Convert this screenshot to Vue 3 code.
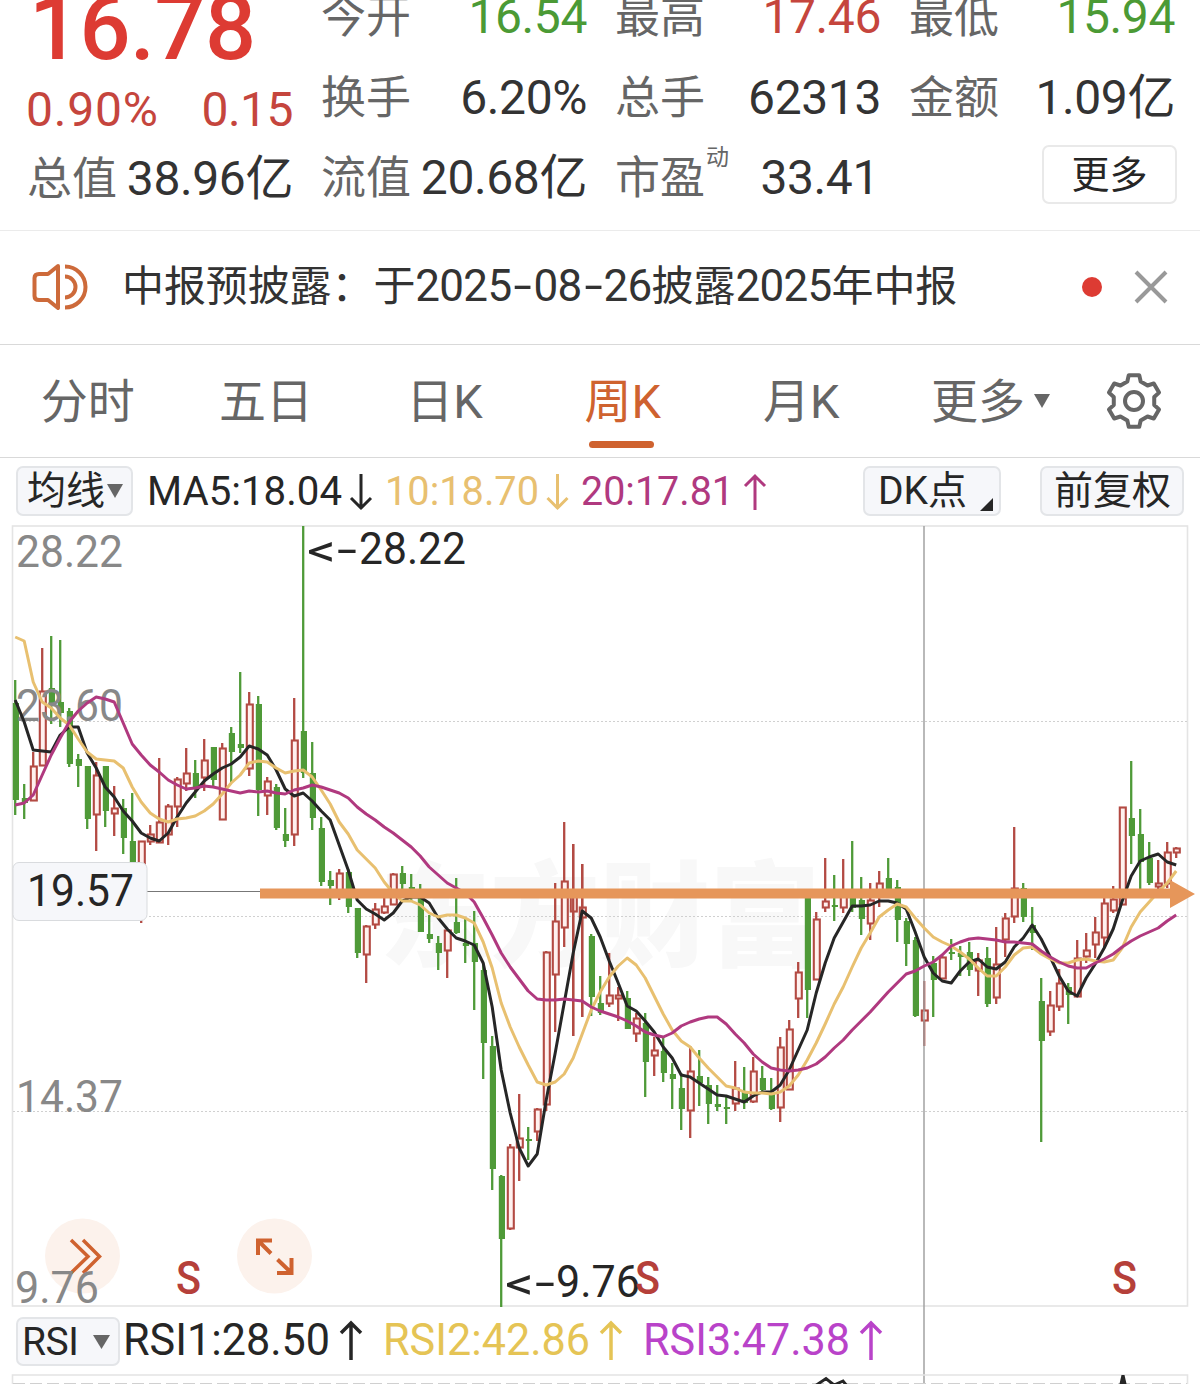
<script setup>
const quoteColumns = [
  [
    { label: '今开', value: '16.54', tone: 'green' },
    { label: '换手', value: '6.20%' },
    { label: '流值', value: '20.68亿' },
  ],
  [
    { label: '最高', value: '17.46', tone: 'red' },
    { label: '总手', value: '62313' },
    { label: '市盈', sup: '动', value: '33.41' },
  ],
  [
    { label: '最低', value: '15.94', tone: 'green' },
    { label: '金额', value: '1.09亿' },
  ],
]

const tabs = ['分时', '五日', '日K', '周K', '月K']
const activeTab = '周K'

const maLegend = [
  { text: 'MA5:18.04', x: 147, w: 195, color: '#262626', arrow: 361, up: false },
  { text: '10:18.70', x: 385, w: 154, color: '#e8c070', arrow: 557.5, up: false },
  { text: '20:17.81', x: 581, w: 153, color: '#b0397f', arrow: 755, up: true },
]
const rsiLegend = [
  { text: 'RSI1:28.50', x: 122, w: 207, color: '#262626', arrow: 350, up: true },
  { text: 'RSI2:42.86', x: 382, w: 207, color: '#e5c455', arrow: 610, up: true },
  { text: 'RSI3:47.38', x: 642, w: 207, color: '#b943c9', arrow: 870, up: true },
]

// direction, high, body top, body bottom, low; one entry per week
const raw = `G680,703,800,815 G784,798,803,819 R752,766,800,800 R648,691,765,765 G636,688,705,724 G640,702,713,727
G708,711,764,767 G754,759,766,787 G766,766,819,829 R762,775,814,851 G766,766,811,827 R786,808,813,836
G799,808,838,854 G793,841,870,870 R841,841,885,923 R825,834,841,845 R758,822,842,842 R804,806,834,845
R777,779,806,827 R748,773,783,791 G760,773,787,798 R739,760,777,791 G747,747,780,786 R743,748,819,819
G727,733,752,782 G672,744,748,753 R692,704,768,776 G696,704,790,816 R777,781,795,815 G784,787,828,830
G808,834,841,847 R698,740,834,846 G526,731,773,778 G742,773,818,830 G817,828,882,886 G871,880,886,905
R869,873,890,900 G869,872,907,913 G908,908,953,958 R925,926,954,983 R903,909,924,929 R897,906,912,914
R873,874,904,904 G866,873,884,897 G874,887,892,902 G884,893,932,932 G915,934,939,943 G936,943,953,970
R930,930,950,978 G878,922,933,934 G918,943,946,963 G911,943,962,1010 G963,970,1043,1079 G1036,1046,1169,1190
G1175,1176,1239,1307 R1144,1147,1228,1230 R1094,1138,1147,1181 G1127,1139,1141,1160 R1108,1109,1131,1141
R951,952,1104,1111 R883,921,974,1032 R822,881,927,947 R844,891,911,1036 R864,907,917,1017 G934,936,997,1016
G976,1003,1013,1015 R953,995,1003,1007 R987,995,998,1021 G991,998,1029,1029 R1013,1018,1033,1042
G1013,1023,1062,1097 R1037,1050,1055,1076 G1037,1051,1073,1082 G1063,1074,1079,1109 G1073,1088,1109,1130
R1046,1071,1110,1138 G1050,1076,1083,1106 G1077,1085,1104,1124 G1085,1104,1107,1111 G1097,1107,1109,1124
R1061,1088,1103,1111 G1067,1092,1103,1109 R1057,1071,1101,1103 G1066,1078,1090,1093 G1078,1092,1109,1110
R1037,1047,1107,1122 R1020,1029,1089,1089 R962,972,998,1018 G893,893,990,1018 R912,919,979,979
R858,901,907,912 G875,905,907,921 R859,892,907,913 G841,890,908,912 G877,900,919,935 R883,900,923,940
R871,883,892,907 G858,878,893,895 G880,887,920,942 G918,921,944,966 G937,940,1016,1017 R981,1010,1020,1046
G956,963,980,1017 R956,957,978,978 G939,952,954,960 G946,953,957,976 G942,952,970,976 R953,960,970,996
G947,958,1004,1007 R927,964,997,1004 R913,918,939,957 R827,888,916,923 G883,888,917,922 G907,925,933,950
G978,1001,1041,1142 R991,1005,1031,1036 R969,983,1006,1011 G983,987,995,1024 R940,958,996,996 R933,950,956,963
R917,932,944,958 R898,903,937,947 R886,899,910,913 R807,807,904,904 G761,818,836,864 G809,834,862,889
G842,858,883,885 R860,883,886,889 R842,852,883,888 R847,848,852,858`

const candles = raw.split(/\s+/).map((item, i) => {
  const [high, top, bottom, low] = item.slice(1).split(',').map(Number)
  return { x: 15.2 + i * 9, up: item[0] === 'R', high, top, bottom, low }
})

const toPath = (values) =>
  values
    .trim()
    .split(/\s+/)
    .map((y, i) => `${15.2 + i * 9},${y}`)
    .join(' ')

const ma5 = toPath(`700 722 750 751 752 735 727 727 753 768 787 797 811 821 833 838 841 833 817 803 792 781 774 768 764
757 746 749 755 770 789 796 793 801 811 820 845 870 900 909 914 920 913 901 897 897 903 918 929 938 941 945 963 1007
1070 1113 1148 1166 1154 1100 1053 1003 953 911 918 937 961 983 1006 1011 1021 1032 1047 1058 1075 1077 1083 1089
1095 1096 1099 1102 1096 1092 1092 1085 1070 1050 1030 993 963 938 922 906 906 905 901 901 903 909 932 957 973 981
983 971 962 959 967 969 962 947 938 925 939 957 976 991 996 978 964 948 929 901 876 861 857 854 862 865`)
const ma10 = toPath(`637 641 682 702 708 718 725 739 752 759 760 761 768 787 802 813 819 822 819 818 816 811 804 794 783
775 763 761 762 768 773 771 770 777 790 804 822 834 850 859 868 882 893 901 901 905 913 917 915 915 918 923 942 968
1003 1027 1047 1065 1082 1085 1082 1074 1058 1034 1010 992 977 966 958 965 978 996 1014 1030 1041 1047 1058 1068
1077 1086 1088 1092 1093 1093 1094 1092 1086 1075 1060 1043 1024 1004 987 967 948 933 917 910 904 907 918 928 937
942 946 952 959 968 976 976 967 955 948 947 954 959 963 963 960 959 961 962 960 948 927 912 902 892 883 871`)
const ma20 = toPath(`805 803 795 775 755 738 722 711 703 697 699 702 723 744 755 765 772 780 785 789 788 786 787 789 791
793 791 792 791 793 794 790 788 785 787 790 793 798 807 814 820 827 833 840 847 856 867 875 883 888 893 902 918 935
953 967 979 991 999 1000 1000 999 1000 1001 1007 1011 1014 1017 1021 1026 1032 1035 1037 1033 1026 1022 1019 1017
1017 1024 1034 1043 1054 1062 1068 1070 1071 1070 1068 1064 1057 1048 1040 1030 1021 1012 1002 992 983 974 971 966
962 955 946 942 939 938 939 940 942 942 943 944 951 957 962 966 968 968 963 959 954 947 941 936 932 928 921 915`)

// six-toothed cog outline
const cog = (() => {
  const pts = []
  for (let k = 0; k < 6; k++) {
    const a = -Math.PI / 2 + (k * Math.PI) / 3
    for (const [d, r] of [[-0.33, 20.6], [-0.2, 26.4], [0.2, 26.4], [0.33, 20.6]]) {
      pts.push(`${(30 + r * Math.cos(a + d)).toFixed(2)},${(30 + r * Math.sin(a + d)).toFixed(2)}`)
    }
  }
  return pts.join(' ')
})()

const arrow = (x, top, bottom, up, s = 10) =>
  up
    ? `M${x} ${bottom}V${top + 2}M${x - s} ${top + s + 2}L${x} ${top + 2}L${x + s} ${top + s + 2}`
    : `M${x} ${top}V${bottom - 2}M${x - s} ${bottom - s - 2}L${x} ${bottom - 2}L${x + s} ${bottom - s - 2}`
</script>

<template>
  <main class="page">
    <header class="quote">
      <div class="column lead">
        <div class="price">16.78</div>
        <div class="change"><span class="pct">0.90%</span><span>0.15</span></div>
        <div class="cell"><span class="label">总值</span><span class="value">38.96亿</span></div>
      </div>
      <div v-for="(column, c) in quoteColumns" :key="c" class="column">
        <div v-for="cell in column" :key="cell.label" class="cell" :class="{ pe: cell.sup }">
          <span class="label">{{ cell.label }}<sup v-if="cell.sup">{{ cell.sup }}</sup></span>
          <span class="value" :class="cell.tone">{{ cell.value }}</span>
        </div>
        <div v-if="c === 2" class="more-row"><button class="more">更多</button></div>
      </div>
    </header>

    <section class="notice">
      <svg class="speaker" width="58" height="50" viewBox="0 0 58 50">
        <g fill="none" stroke="#cd6a3a" stroke-width="4">
          <path d="M28 4 18 12H9Q4.500 12 4.500 16V34Q4.500 38 9 38H18L28 46Z" stroke-linejoin="round" />
          <path d="M35 14.500A10.500 10.500 0 0 1 35 35.500" />
          <path d="M35 4.500A20.500 20.500 0 0 1 35 45.500" />
        </g>
      </svg>
      <p>中报预披露：于<span class="n">2025<i>-</i>08<i>-</i>26</span>披露<span class="n">2025</span>年中报</p>
      <span class="dot"></span>
      <svg class="close" width="34" height="34" viewBox="0 0 34 34">
        <path d="M2 2 32 32M32 2 2 32" stroke="#999" stroke-width="4" />
      </svg>
    </section>

    <nav class="tabs">
      <a v-for="tab in tabs" :key="tab" :class="{ active: tab === activeTab }">{{ tab }}</a>
      <a class="drop">更多<svg width="16" height="14"><path d="M0 0H16L8 14Z" fill="#666" /></svg></a>
      <svg class="gear" width="60" height="60" viewBox="0 0 60 60">
        <g fill="none" stroke="#666" stroke-width="4">
          <polygon :points="cog" stroke-linejoin="round" />
          <circle cx="30" cy="30" r="9" />
        </g>
      </svg>
    </nav>

    <section class="bar">
      <button class="chip avg">均线<svg width="16" height="14"><path d="M0 0H16L8 14Z" fill="#666" /></svg></button>
      <svg class="legend" width="731" height="58" viewBox="133 458 731 58">
        <g v-for="m in maLegend" :key="m.text">
          <text :x="m.x" y="505" :textLength="m.w" lengthAdjust="spacingAndGlyphs" font-size="41" :fill="m.color">{{ m.text }}</text>
          <path :d="arrow(m.arrow, 474, 510, m.up)" fill="none" :stroke="m.color" stroke-width="3" />
        </g>
      </svg>
      <button class="chip dk">DK点<svg width="13" height="13"><path d="M13 0V13H0Z" fill="#262626" /></svg></button>
      <button class="chip adj">前复权</button>
    </section>

    <svg class="chart" width="1200" height="794" viewBox="0 516 1200 794">
      <rect x="12.500" y="526" width="1175" height="780" fill="none" stroke="#e4e4e4" stroke-width="1.600" />
      <g class="watermark"><text x="380" y="957" textLength="440" lengthAdjust="spacingAndGlyphs">东方财富</text></g>
      <path d="M13 721.500H1187M13 916.500H1187M13 1111.500H1187" stroke="#d0d0d0" stroke-dasharray="2 2" />

      <circle cx="82.500" cy="1256" r="37.500" fill="#fcf2ec" />
      <circle cx="274.500" cy="1256" r="37.500" fill="#fcf2ec" />
      <g fill="none" stroke="#cf622f" stroke-width="3.500">
        <path d="M71 1240 88 1256.500 71 1273M83 1240 99.500 1256.500 83 1273" />
        <path d="M272 1240.500H258V1255M258 1240.500 271 1253.500M277 1273H291.500V1258M291.500 1273 277.500 1259.500" stroke-width="4" />
      </g>

      <g v-for="(c, i) in candles" :key="i">
        <template v-if="c.up">
          <path :d="`M${c.x} ${c.high}V${c.top}M${c.x} ${c.bottom}V${c.low}`" stroke="#b34a43" stroke-width="2.300" />
          <rect :x="c.x - 2.400" :y="c.top + 0.500" width="6" :height="Math.max(c.bottom - c.top, 1)" fill="#fff1ef" stroke="#b34a43" stroke-width="2.100" />
          <path v-if="i === 62 || i === 63" :d="`M${c.x} ${c.high}V${c.low}`" stroke="#b34a43" stroke-width="2.300" />
        </template>
        <template v-else>
          <path :d="`M${c.x} ${c.high}V${c.low}`" stroke="#4f9a38" stroke-width="2.300" />
          <rect :x="c.x - 2.400" :y="c.top" width="6.200" :height="c.bottom - c.top" fill="#4f9a38" />
        </template>
      </g>

      <g class="axis">
        <text x="16" y="567" textLength="107" lengthAdjust="spacingAndGlyphs">28.22</text>
        <text x="16" y="721" textLength="107" lengthAdjust="spacingAndGlyphs">23.60</text>
        <text x="16" y="1112" textLength="107" lengthAdjust="spacingAndGlyphs">14.37</text>
        <text x="15" y="1303" textLength="84" lengthAdjust="spacingAndGlyphs">9.76</text>
      </g>

      <path d="M924 526V1384" stroke="#a2a2a2" stroke-width="1.500" />
      <g fill="none" stroke-width="3" stroke-linejoin="round">
        <polyline :points="ma5" stroke="#262626" />
        <polyline :points="ma10" stroke="#e8c070" />
        <polyline :points="ma20" stroke="#b0397f" />
      </g>

      <path d="M147 891.500H262" stroke="#777" />
      <path d="M260 888.500H1170V880L1195 894 1170 908V898.500H260Z" fill="#e6965a" />
      <rect x="13" y="862.500" width="134" height="58" rx="6" fill="#f6f7fa" stroke="#d9dbde" />

      <g class="mark">
        <text x="27" y="906" textLength="107" lengthAdjust="spacingAndGlyphs">19.57</text>
        <text x="307" y="566" textLength="29" lengthAdjust="spacingAndGlyphs">&lt;</text>
        <text x="337" y="565" textLength="20" lengthAdjust="spacingAndGlyphs">-</text>
        <text x="359" y="564" textLength="107" lengthAdjust="spacingAndGlyphs">28.22</text>
        <text x="505" y="1299" textLength="29" lengthAdjust="spacingAndGlyphs">&lt;</text>
        <text x="535" y="1298" textLength="20" lengthAdjust="spacingAndGlyphs">-</text>
        <text x="556" y="1297" textLength="84" lengthAdjust="spacingAndGlyphs">9.76</text>
      </g>
      <g class="signal">
        <text x="176" y="1294" textLength="25" lengthAdjust="spacingAndGlyphs">S</text>
        <text x="635" y="1294" textLength="25" lengthAdjust="spacingAndGlyphs">S</text>
        <text x="1112" y="1294" textLength="25" lengthAdjust="spacingAndGlyphs">S</text>
      </g>
    </svg>

    <section class="rsi">
      <button class="chip rsi-chip">RSI<svg width="17" height="14"><path d="M0 0H17L8.500 14Z" fill="#666" /></svg></button>
      <svg class="legend" width="790" height="60" viewBox="119 1310 790 60">
        <g v-for="m in rsiLegend" :key="m.text">
          <text :x="m.x" y="1355" :textLength="m.w" lengthAdjust="spacingAndGlyphs" font-size="44" :fill="m.color">{{ m.text }}</text>
          <path :d="arrow(m.arrow, 1321, 1360, m.up)" fill="none" :stroke="m.color" stroke-width="3.500" />
        </g>
      </svg>
    </section>

    <svg class="panel" width="1200" height="14" viewBox="0 1370 1200 14">
      <path d="M12.500 1384V1375H1187.500V1384" fill="none" stroke="#e4e4e4" stroke-width="1.600" />
      <path d="M13 1383.500H1187" stroke="#d0d0d0" stroke-dasharray="12 5" />
      <path d="M815 1386 826 1378.500 834 1385 843 1381 847 1386" fill="none" stroke="#262626" stroke-width="3" />
      <path d="M1119 1386 1121.500 1375H1124.500L1127 1386Z" fill="#262626" />
    </svg>
  </main>
</template>

<style>
body {
  background: #fff;
  overflow: hidden;
}
</style>

<style scoped>
.page {
  width: 1200px;
  height: 1384px;
  overflow: hidden;
  background: #fff;
  color: #333;
  font-family: Roboto, 'Noto Sans CJK SC', sans-serif;
}
.page * {
  box-sizing: border-box;
}
button {
  padding: 0;
  color: #262626;
  font-family: inherit;
}
.quote {
  display: flex;
  gap: 28px;
  height: 231px;
  padding: 0 26px 0 27px;
  border-bottom: 1px solid #ebebeb;
}
.column {
  flex: none;
  width: 266px;
  margin-top: -24px;
}
.column.lead {
  margin-top: -51px;
}
.price {
  height: 126px;
  padding-left: 2px;
  color: #dd3b33;
  font-size: 90px;
  font-weight: 500;
  line-height: 159px;
  letter-spacing: -0.600px;
}
.change {
  display: flex;
  justify-content: space-between;
  height: 63px;
  color: #c5453d;
  font-size: 48px;
  line-height: 69px;
  letter-spacing: -0.500px;
}
.pct {
  margin-left: -1px;
  letter-spacing: 0.800px;
}
.cell {
  display: flex;
  justify-content: space-between;
  height: 80.500px;
  line-height: 81px;
  white-space: nowrap;
}
.label {
  position: relative;
  top: 1px;
  color: #666;
  font-size: 45px;
}
.value {
  font-size: 48px;
  letter-spacing: -0.400px;
}
.green {
  color: #4b9a35;
}
.red {
  color: #c5453d;
}
.pe .value {
  margin-right: 2px;
}
sup {
  position: absolute;
  top: -21px;
  left: 91px;
  font-size: 23px;
}
.more-row {
  display: flex;
  justify-content: flex-end;
  padding-top: 8px;
}
.more {
  width: 135px;
  height: 59px;
  margin-right: -2px;
  border: 2px solid #e9e9e9;
  border-radius: 7px;
  background: #fff;
  font-size: 38px;
  line-height: 50px;
}
.notice {
  display: flex;
  align-items: center;
  height: 114px;
  padding: 0 32px 2px 30px;
  border-bottom: 1px solid #d9d9d9;
}
.notice p {
  margin: 0 0 0 34px;
  font-size: 42px;
  line-height: 60px;
  letter-spacing: -0.100px;
  white-space: nowrap;
}
.n {
  font-size: 44px;
  letter-spacing: -0.700px;
}
.n i {
  display: inline-block;
  width: 22px;
  font-style: normal;
  text-align: center;
  transform: scaleX(1.500);
}
.dot {
  width: 20px;
  height: 20px;
  margin-left: auto;
  border-radius: 50%;
  background: #dd3b33;
}
.close {
  margin-left: 32px;
}
.tabs {
  display: flex;
  align-items: center;
  height: 113px;
  border-bottom: 1px solid #d9d9d9;
  color: #666;
  font-size: 47px;
}
.tabs a {
  position: relative;
  width: 178.400px;
  height: 112px;
  padding-right: 3px;
  line-height: 113px;
  text-align: center;
}
.tabs .active {
  color: #cf622f;
}
.active::after {
  position: absolute;
  bottom: 9px;
  left: 54px;
  width: 65px;
  height: 7px;
  border-radius: 4px;
  background: #cf622f;
  content: '';
}
.tabs .drop {
  display: flex;
  align-items: center;
  width: 212px;
  padding: 0 0 0 39px;
}
.drop svg {
  margin-left: 9px;
}
.bar {
  display: flex;
  align-items: center;
  height: 58px;
  padding: 8px 0 0 16px;
}
.chip {
  display: flex;
  flex: none;
  align-items: center;
  height: 50px;
  border: 2px solid #e3e5e8;
  border-radius: 7px;
  background: #f6f7fa;
  font-size: 39px;
  line-height: 46px;
}
.avg {
  width: 117px;
  padding-left: 9px;
}
.avg svg {
  margin-left: 2px;
}
.legend {
  flex: none;
  margin-top: -8px;
}
.dk {
  width: 138px;
  margin-left: -1px;
  padding-left: 13px;
}
.dk svg {
  margin: 26px 0 0 13px;
}
.adj {
  width: 144px;
  margin-left: 39px;
  padding-left: 12px;
}
.chart,
.panel {
  display: block;
  overflow: visible;
}
.watermark text {
  fill: #f8f8f8;
  font-family: 'Noto Sans CJK SC', sans-serif;
  font-size: 114px;
  font-weight: 900;
}
.axis text {
  fill: #888;
  font-size: 44.500px;
}
.mark text {
  fill: #262626;
  font-size: 44.500px;
}
.signal text {
  fill: #b5403a;
  font-size: 46px;
  font-weight: 500;
}
.rsi {
  display: flex;
  height: 60px;
  padding: 7px 0 0 16px;
}
.rsi .legend {
  margin-top: -7px;
}
.rsi-chip {
  width: 104px;
  height: 49px;
  padding-left: 4px;
  letter-spacing: -0.500px;
}
.rsi-chip svg {
  margin-left: 15px;
}
</style>
